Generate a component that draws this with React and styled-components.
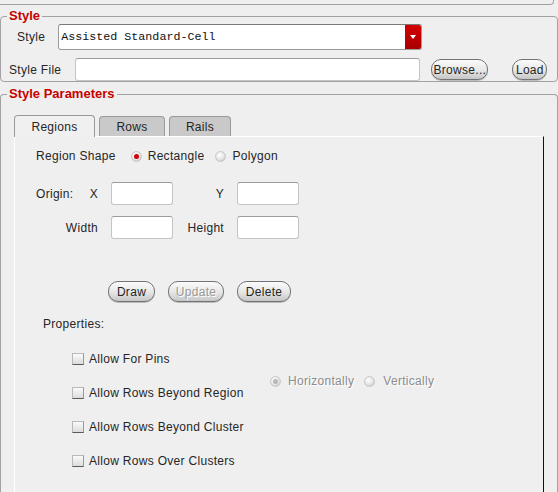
import React from 'react'
import styled, { createGlobalStyle } from 'styled-components'

const GlobalStyle = createGlobalStyle`
  html, body {
    margin: 0;
    padding: 0;
    background: #efefef;
  }
  body {
    width: 558px;
    height: 492px;
    overflow: hidden;
    font-family: "Liberation Sans", Arial, sans-serif;
    font-size: 12px;
    color: #262626;
  }
`

const Page = styled.div`
  width: 558px;
  display: flex;
  flex-direction: column;
`

const TopRemnant = styled.div`
  height: 4px;
  margin-left: -4px;
  border-right: 1px solid #a2a2a2;
  border-bottom: 1px solid #a2a2a2;
  border-bottom-right-radius: 4px;
  width: 557px;
`

const Group = styled.fieldset`
  box-sizing: border-box;
  width: 558px;
  min-inline-size: 0;
  margin: ${(p) => p.$top || 0}px 0 0 0;
  padding: ${(p) => p.$pad || '0'};
  border: 1px solid #a2a2a2;
  border-radius: 4px;
  ${(p) => p.$open && 'border-bottom: none; height: 420px; border-bottom-left-radius: 0; border-bottom-right-radius: 0;'}
`

const Legend = styled.legend`
  margin-left: 6px;
  padding: 0 2px;
  font-size: 13px;
  line-height: 14px;
  font-weight: bold;
  color: #c80000;
`

const FieldRow = styled.div`
  display: flex;
  align-items: center;
  padding-left: ${(p) => p.$indent}px;
  margin-top: ${(p) => p.$top || 0}px;
`

const Label = styled.span`
  letter-spacing: 0.3px;
  margin-right: ${(p) => p.$gap || 0}px;
  color: ${(p) => (p.$disabled ? '#8c8c8c' : '#262626')};
  ${(p) => p.$disabled && 'text-shadow: 1px 1px 0 #ffffff;'}
`

const Combo = styled.div`
  box-sizing: border-box;
  width: 364px;
  height: 26px;
  display: flex;
  align-items: stretch;
  background: #fff;
  border: 1px solid #9a9a9a;
  border-top-color: #7a7a7a;
  border-radius: 3px;
  overflow: hidden;
`

const ComboText = styled.div`
  flex: 1;
  display: flex;
  align-items: center;
  padding-left: 2px;
  font-family: "Liberation Mono", "Courier New", monospace;
  font-size: 11.7px;
  color: #111;
`

const ComboButton = styled.div`
  width: 16px;
  display: flex;
  align-items: center;
  justify-content: center;
  background: linear-gradient(#d40000, #a80000);
  &::after {
    content: '';
    border-left: 3px solid transparent;
    border-right: 3px solid transparent;
    border-top: 4px solid #fff;
  }
`

const TextInput = styled.div`
  box-sizing: border-box;
  width: ${(p) => p.$w}px;
  height: 23px;
  background: #fff;
  border: 1px solid #c4c4c4;
  border-top-color: #9c9c9c;
  border-radius: 3px;
`

const Pill = styled.button`
  box-sizing: border-box;
  height: 21px;
  width: ${(p) => p.$w}px;
  margin-left: ${(p) => p.$left || 0}px;
  padding: 0;
  font-family: "Liberation Sans", Arial, sans-serif;
  font-size: 12px;
  letter-spacing: 0.3px;
  color: ${(p) => (p.disabled ? '#9a9a9a' : '#262626')};
  ${(p) => p.disabled && 'text-shadow: 1px 1px 0 #ffffff;'}
  background: linear-gradient(#fbfbfb, #e6e6e6 55%, #c6c6c6);
  border: 1px solid #737373;
  border-radius: 10px;
  box-shadow: 0 1px 0 #bdbdbd;
`

const TabBar = styled.div`
  display: flex;
  align-items: flex-end;
  gap: 4px;
  margin-left: 13px;
  margin-top: 14px;
`

const Tab = styled.div`
  box-sizing: border-box;
  width: ${(p) => p.$w}px;
  height: ${(p) => (p.$active ? 22 : 20)}px;
  display: flex;
  align-items: center;
  justify-content: center;
  letter-spacing: 0.3px;
  background: ${(p) => (p.$active ? '#f0f0f0' : '#c9c9c9')};
  border: 1px solid #999;
  border-bottom: none;
  border-radius: 4px 4px 0 0;
  padding-top: ${(p) => (p.$active ? 0 : 1)}px;
  position: relative;
  z-index: ${(p) => (p.$active ? 1 : 0)};
  margin-bottom: ${(p) => (p.$active ? -1 : 0)}px;
`

const TabPanel = styled.div`
  box-sizing: border-box;
  width: 530px;
  height: 360px;
  margin-left: 13px;
  border-top: 1px solid #fff;
  border-left: 1px solid #fff;
  border-right: 1px solid #111;
  padding: 10px 0 0 21px;
  display: flex;
  flex-direction: column;
  align-items: flex-start;
`

const ShapeRow = styled.div`
  display: flex;
  align-items: center;
  height: 18px;
`

const Radio = styled.span`
  box-sizing: border-box;
  width: 11px;
  height: 11px;
  border-radius: 50%;
  margin-right: ${(p) => p.$gap}px;
  display: inline-flex;
  align-items: center;
  justify-content: center;
  background: radial-gradient(circle at 40% 35%, #ffffff, #e4e4e4 55%, #b4b4b4);
  border: 1px solid #c8c8c8;
  &::after {
    content: '';
    width: 5px;
    height: 5px;
    border-radius: 50%;
    background: ${(p) => (p.$on === 'red' ? '#d00000' : p.$on === 'gray' ? '#b8b8b8' : 'transparent')};
  }
`

const CoordGrid = styled.div`
  display: grid;
  grid-template-columns: 62px 62px 38px 62px;
  column-gap: 13px;
  row-gap: 11px;
  margin-top: 17px;
  align-items: center;
`

const CoordLabel = styled.div`
  display: flex;
  justify-content: ${(p) => (p.$split ? 'space-between' : 'flex-end')};
  letter-spacing: 0.3px;
  white-space: nowrap;
`

const ButtonRow = styled.div`
  display: flex;
  margin-top: 42px;
  margin-left: 72px;
`

const SectionLabel = styled.div`
  margin-top: 14px;
  margin-left: 7px;
  line-height: 16px;
  letter-spacing: 0.3px;
`

const PropGrid = styled.div`
  display: grid;
  grid-template-columns: 198px auto;
  grid-auto-rows: 34px;
  margin-top: 10px;
  margin-left: 36px;
`

const CheckRow = styled.label`
  display: flex;
  align-items: center;
  grid-column: 1;
  letter-spacing: 0.3px;
`

const Check = styled.span`
  box-sizing: border-box;
  width: 12px;
  height: 12px;
  margin-right: 5px;
  background: linear-gradient(#fafafa, #dcdcdc);
  border: 1px solid #b9b9b9;
  border-bottom-color: #5a5a5a;
  border-right-color: #9a9a9a;
`

const OrientGroup = styled.div`
  grid-column: 2;
  grid-row: 1 / span 2;
  align-self: center;
  padding-top: 10px;
  display: flex;
  align-items: center;
`

export default function App() {
  const props = ['Allow For Pins', 'Allow Rows Beyond Region', 'Allow Rows Beyond Cluster', 'Allow Rows Over Clusters']
  return (
    <Page>
      <GlobalStyle />
      <TopRemnant />
      <Group $top={4} $pad="1px 0 0 0">
        <Legend>Style</Legend>
        <FieldRow $indent={16}>
          <Label $gap={13}>Style</Label>
          <Combo>
            <ComboText>Assisted Standard-Cell</ComboText>
            <ComboButton />
          </Combo>
        </FieldRow>
        <FieldRow $indent={8} $top={8}>
          <Label $gap={14}>Style File</Label>
          <TextInput $w={345} />
          <Pill $w={57} $left={11}>Browse...</Pill>
          <Pill $w={35} $left={24}>Load</Pill>
        </FieldRow>
      </Group>
      <Group $top={5} $open>
        <Legend>Style Parameters</Legend>
        <TabBar>
          <Tab $w={81} $active>Regions</Tab>
          <Tab $w={66}>Rows</Tab>
          <Tab $w={62}>Rails</Tab>
        </TabBar>
        <TabPanel>
          <ShapeRow>
            <Label $gap={15}>Region Shape</Label>
            <Radio $on="red" $gap={6} />
            <Label $gap={11}>Rectangle</Label>
            <Radio $gap={6} />
            <Label>Polygon</Label>
          </ShapeRow>
          <CoordGrid>
            <CoordLabel $split>
              <span>Origin:</span>
              <span>X</span>
            </CoordLabel>
            <TextInput $w={62} />
            <CoordLabel>Y</CoordLabel>
            <TextInput $w={62} />
            <CoordLabel>Width</CoordLabel>
            <TextInput $w={62} />
            <CoordLabel>Height</CoordLabel>
            <TextInput $w={62} />
          </CoordGrid>
          <ButtonRow>
            <Pill $w={47}>Draw</Pill>
            <Pill $w={56} $left={13} disabled>Update</Pill>
            <Pill $w={54} $left={13}>Delete</Pill>
          </ButtonRow>
          <SectionLabel>Properties:</SectionLabel>
          <PropGrid>
            {props.map((p) => (
              <CheckRow key={p}>
                <Check />
                {p}
              </CheckRow>
            ))}
            <OrientGroup>
              <Radio $on="gray" $gap={7} />
              <Label $disabled $gap={10}>Horizontally</Label>
              <Radio $gap={8} />
              <Label $disabled>Vertically</Label>
            </OrientGroup>
          </PropGrid>
        </TabPanel>
      </Group>
    </Page>
  )
}
